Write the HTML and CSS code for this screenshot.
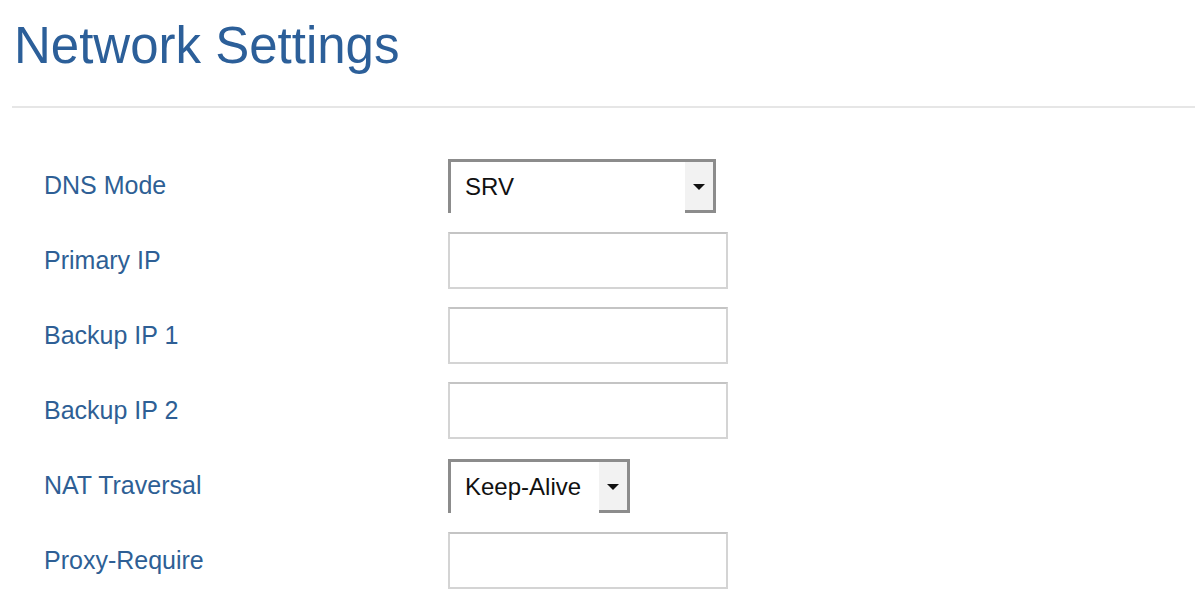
FILE: index.html
```html
<!DOCTYPE html>
<html>
<head>
<meta charset="utf-8">
<link rel="stylesheet" href="styles.css">
</head>
<body>
<div class="page">
  <h1 class="title">Network Settings</h1>
  <div class="divider"></div>
  <div class="form">
    <div class="row">
      <div class="label">DNS Mode</div>
      <div class="select select-wide">
        <span class="select-text">SRV</span>
        <span class="select-btn"><span class="tri"></span></span>
      </div>
    </div>
    <div class="row">
      <div class="label">Primary IP</div>
      <div class="input"></div>
    </div>
    <div class="row">
      <div class="label">Backup IP 1</div>
      <div class="input"></div>
    </div>
    <div class="row">
      <div class="label">Backup IP 2</div>
      <div class="input"></div>
    </div>
    <div class="row">
      <div class="label">NAT Traversal</div>
      <div class="select select-narrow">
        <span class="select-text">Keep-Alive</span>
        <span class="select-btn"><span class="tri"></span></span>
      </div>
    </div>
    <div class="row">
      <div class="label">Proxy-Require</div>
      <div class="input"></div>
    </div>
  </div>
</div>
</body>
</html>
```
FILE: styles.css
```css
html, body {
  margin: 0;
  padding: 0;
  background: #ffffff;
}
body {
  font-family: "Liberation Sans", Arial, sans-serif;
  overflow: hidden;
}
.page {
  padding: 0 5px 0 12px;
}
.title {
  margin: 15px 0 0 2px;
  font-size: 51px;
  line-height: 61px;
  font-weight: normal;
  color: #2c5f99;
  letter-spacing: 0;
}
.divider {
  margin-top: 30px;
  height: 2px;
  background: #e6e6e6;
}
.form {
  margin-top: 40px;
  padding-left: 32px;
}
.row {
  display: flex;
  align-items: center;
  height: 75px;
}
.label {
  width: 404px;
  font-size: 25px;
  color: #2e5f95;
}
.input {
  box-sizing: border-box;
  width: 280px;
  height: 57px;
  border: 2px solid #d4d4d4;
  border-top-color: #c4c4c4;
  background: #fff;
}
.select {
  box-sizing: border-box;
  display: flex;
  align-items: stretch;
  height: 54px;
  border-left: 3px solid #8c8c8c;
  border-top: 3px solid #8c8c8c;
  background: #fff;
}
.select-wide { width: 268px; }
.select-narrow { width: 182px; }
.select-text {
  flex: 1;
  display: flex;
  align-items: center;
  padding-left: 14px;
  font-size: 24px;
  color: #111;
}
.select-btn {
  box-sizing: border-box;
  width: 31px;
  display: flex;
  align-items: center;
  justify-content: center;
  background: #f2f2f2;
  border-right: 3px solid #8c8c8c;
  border-bottom: 3px solid #8c8c8c;
  margin-bottom: 0;
}
.tri {
  width: 0;
  height: 0;
  border-left: 6px solid transparent;
  border-right: 6px solid transparent;
  border-top: 6px solid #111;
  margin-top: 2px;
}
```
